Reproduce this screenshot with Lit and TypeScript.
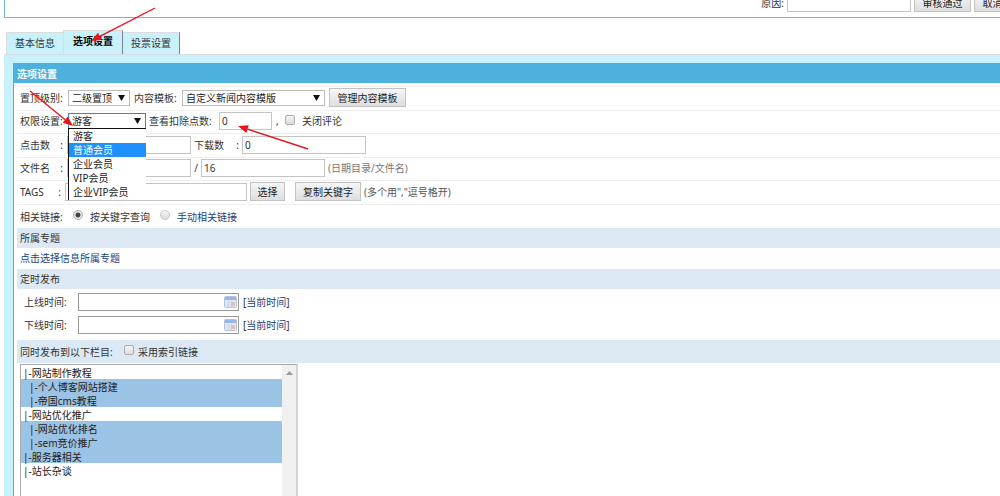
import { LitElement, html, css, svg } from "lit";
import { customElement, state } from "lit/decorators.js";

const LEVELS = ["游客", "普通会员", "企业会员", "VIP会员", "企业VIP会员"];

const COLUMNS = [
  { name: "|-网站制作教程", child: false, picked: false },
  { name: "|-个人博客网站搭建", child: true, picked: true },
  { name: "|-帝国cms教程", child: true, picked: true },
  { name: "|-网站优化推广", child: false, picked: false },
  { name: "|-网站优化排名", child: true, picked: true },
  { name: "|-sem竞价推广", child: true, picked: true },
  { name: "|-服务器相关", child: false, picked: true },
  { name: "|-站长杂谈", child: false, picked: false },
];

const calendar = html`<svg class="cal" viewBox="0 0 13 12" aria-hidden="true">
  <rect x="0.5" y="0.5" width="12" height="11" rx="1" fill="#dfe8f6" stroke="#b3c3de" />
  <rect x="1" y="1" width="11" height="3" fill="#9ab5e2" />
  <path d="M2 6.5h9M2 9h9M4.5 4.5v6.500M7.500 4.500v6.500" stroke="#c6d3ea" stroke-width="0.7" />
  <rect x="7" y="6" width="4" height="4" fill="#eebba6" />
</svg>`;

@customElement("app-root")
export class AppRoot extends LitElement {
  @state() private level = 1;

  static styles = css`
    :host {
      display: block;
      position: relative;
      height: 100vh;
      overflow: hidden;
      background: #fff;
      color: #333;
      font: 10px/14px "Noto Sans", "Noto Sans CJK SC", sans-serif;
    }
    * { box-sizing: border-box; }
    a { color: #23417d; text-decoration: none; }
    .page { display: flex; flex-direction: column; height: 100%; padding-left: 4px; }
    .review {
      display: flex;
      justify-content: flex-end;
      align-items: flex-end;
      gap: 3px;
      height: 18px;
      padding-bottom: 5px;
      border-left: 1px solid #6db9d3;
      border-bottom: 1px solid #6db9d3;
      overflow: hidden;
    }
    .review > * { flex: none; }
    .review label { padding-bottom: 2px; }
    .clipped { width: 26px; overflow: hidden; display: flex; align-items: flex-end; }
    input, button, select { font: inherit; color: inherit; margin: 0; border-radius: 0; outline: none; }
    input[type="text"] {
      height: 18px;
      padding: 0 2px;
      border: 1px solid #c4c4c4;
      background: #fff;
    }
    button {
      flex: none;
      height: 19px;
      padding: 0;
      border: 1px solid #c2c2c2;
      background: linear-gradient(#f6f6f6, #dedede);
      color: #222;
      white-space: nowrap;
    }
    .tabs { display: flex; align-items: flex-end; height: 36px; padding-left: 2px; }
    .tabs button {
      width: 57px;
      height: 22px;
      padding-bottom: 2px;
      border: 0;
      border-top: 1px solid #dcdcdc;
      border-right: 1px solid #77848c;
      background: #c9f1fb;
      color: #333;
    }
    .tabs .first { border-left: 1px solid #dcdcdc; border-right: 0; }
    .tabs .active { width: 60px; height: 24px; padding-bottom: 4px; font-weight: 700; color: #000; border-left: 1px solid #dcdcdc; }
    .panel { flex: 1; min-height: 0; padding: 8px 0 0 9px; background: #c9f1fb; border-top: 1px solid #d6dde0; }
    .sheet { height: 100%; background: #fff; border-left: 1px solid #4eb1dd; padding-left: 3px; }
    h2 {
      margin: 0 0 3px -3px;
      padding: 2px 0 0 3px;
      height: 20px;
      font-size: 10px;
      line-height: 18px;
      color: #fff;
      background: #4eb1dd;
    }
    .row { display: flex; align-items: center; height: 23px; padding: 0 0 2px 3px; border-top: 1px solid #efefef; white-space: nowrap; }
    .tall { height: 24px; }
    .name { width: 48px; flex: none; }
    .split { display: flex; justify-content: space-between; width: 47px; padding-right: 4px; }
    .split.down { width: 48px; padding: 0 3px; margin-left: 3px; padding-left: 0; }
    .split.tags { width: 45px; }
    .mid { padding-left: 4px; width: 52px; flex: none; }
    .points { width: 73px; padding-left: 3px; flex: none; }
    select.drop {
      appearance: none;
      height: 16px;
      padding: 0 14px 0 3px;
      border: 1px solid #bcbcbc;
      background: #fff url("data:image/svg+xml,%3Csvg xmlns='http://www.w3.org/2000/svg' width='7' height='6'%3E%3Cpath d='M0 0h7L3.500 6z' fill='%23111'/%3E%3C/svg%3E") no-repeat right 4px center;
      color: #222;
    }
    .w-top { width: 62px; }
    .w-tpl { width: 143px; }
    .w-level { width: 78px; }
    select.w-level { border-color: #3b7fe0; }
    .w-manage { width: 77px; margin-left: 4px; }
    .w-num { width: 53px; }
    .w-file { width: 124px; }
    .w-tags { width: 182px; }
    .w-pick { width: 35px; margin: 0 10px 0 3px; }
    .w-copy { width: 66px; margin-right: 3px; }
    .w-pass { width: 57px; }
    .w-cancel { width: 57px; }
    .comma { width: 13px; padding-left: 4px; }
    .slash { width: 10px; text-align: center; }
    .hint { color: #777; margin-left: 3px; }
    .note { color: #555; }
    input[type="checkbox"], input[type="radio"] {
      appearance: none;
      flex: none;
      width: 10px;
      height: 10px;
      margin: 0 7px 3px 0;
      border: 1px solid #adadad;
      background: linear-gradient(#f4f4f4, #dcdcdc);
    }
    input[type="checkbox"] { border-radius: 2px; }
    input[type="radio"] { border-radius: 50%; margin-left: 5px; }
    input[type="radio"]:not(:checked) { border-color: #c6c6c6; }
    input[type="radio"]:checked { background: radial-gradient(circle, #444 0 2px, #eee 3px); }
    .auto { width: 65px; flex: none; }
    .combo { position: relative; display: flex; }
    .menu {
      position: absolute;
      z-index: 2;
      top: 15px;
      left: 0;
      width: 78px;
      margin: 0;
      padding: 0 0 1px;
      list-style: none;
      background: #fff;
      border-left: 1px solid #111;
      border-top: 1px solid #111;
      color: #222;
    }
    .menu li { padding-left: 4px; height: 14px; }
    .menu .on { background: #1e90ff; color: #fff; }
    .band { display: flex; align-items: center; height: 20px; padding-left: 3px; background: #dce9f4; }
    .link { display: flex; align-items: center; height: 21px; padding: 0 0 2px 3px; }
    .links { height: 24px; }
    .row.links { padding-bottom: 0; }
    .times { display: flex; flex-direction: column; gap: 5px; padding: 4px 0 6px 7px; }
    .time { display: flex; align-items: center; }
    .time label { width: 54px; }
    .box { position: relative; display: flex; margin-right: 4px; }
    .box input[type="text"] { width: 161px; border: 1px solid #999; padding-right: 18px; }
    .cal { position: absolute; right: 2px; top: 3px; width: 13px; height: 12px; }
    .publish { height: 23px; }
    .target { width: 104px; }
    .publish input { margin-right: 4px; }
    .listbox {
      display: flex;
      width: 278px;
      height: 280px;
      margin: 1px 0 0 3px;
      border: 1px solid #a9a9a9;
      border-right: 2px solid #d4d4d4;
    }
    select.list {
      flex: 1;
      min-width: 0;
      height: 100%;
      padding: 0;
      border: 0;
      overflow-y: auto;
      background: #fff;
      color: #222;
    }
    .track { display: flex; flex: none; justify-content: center; width: 14px; padding-top: 6px; background: #f0f0f0; }
    .track svg { width: 7px; height: 4px; fill: #999; }
    .list option { display: block; height: 14px; min-height: 14px; padding: 0 2px; line-height: 14px; color: #222; }
    .list option.child { padding-left: 8px; }
    .list option:checked { background: #9ac3e5 linear-gradient(#9ac3e5, #9ac3e5); color: #222; }
    .arrows { position: absolute; inset: 0; z-index: 3; width: 100%; height: 100%; pointer-events: none; }
  `;

  private arrow(x1: number, y1: number, x2: number, y2: number) {
    const a = Math.atan2(y2 - y1, x2 - x1);
    const bx = x2 - 10 * Math.cos(a);
    const by = y2 - 10 * Math.sin(a);
    const dx = 4 * Math.sin(a);
    const dy = 4 * Math.cos(a);
    return svg`
      <path d="M${x1} ${y1}L${bx} ${by}" stroke="#e8141c" stroke-width="1.4" />
      <path d="M${x2} ${y2}L${bx + dx} ${by - dy}L${bx - dx} ${by + dy}z" fill="#e8141c" />`;
  }

  render() {
    return html`
      <div class="page">
        <div class="review">
          <label for="reason">原因:</label>
          <input id="reason" class="w-file" type="text" />
          <button class="w-pass">审核通过</button>
          <div class="clipped"><button class="w-cancel">取消审核</button></div>
        </div>
        <nav class="tabs">
          <button class="first">基本信息</button>
          <button class="active">选项设置</button>
          <button>投票设置</button>
        </nav>
        <main class="panel">
          <div class="sheet">
            <h2>选项设置</h2>
            <div class="row tall">
              <label class="name" for="top">置顶级别:</label>
              <select id="top" class="drop w-top"><option>二级置顶</option></select>
              <label class="mid" for="tpl">内容模板:</label>
              <select id="tpl" class="drop w-tpl"><option>自定义新闻内容模版</option></select>
              <button class="w-manage">管理内容模板</button>
            </div>
            <div class="row">
              <label class="name" for="level">权限设置:</label>
              <div class="combo">
                <select id="level" class="drop w-level"><option>游客</option></select>
                <ul class="menu" role="listbox">
                  ${LEVELS.map((l, i) => html`<li role="option" class=${i === this.level ? "on" : ""}
                    aria-selected=${i === this.level} @mouseenter=${() => (this.level = i)}>${l}</li>`)}
                </ul>
              </div>
              <label class="points" for="points">查看扣除点数:</label>
              <input id="points" class="w-num" type="text" value="0" />
              <span class="comma">,</span>
              <input id="closed" type="checkbox" /><label for="closed">关闭评论</label>
            </div>
            <div class="row tall">
              <label class="split" for="hits"><span>点击数</span><span>:</span></label>
              <input id="hits" class="w-file" type="text" />
              <label class="split down" for="downs"><span>下载数</span><span>:</span></label>
              <input id="downs" class="w-file" type="text" value="0" />
            </div>
            <div class="row">
              <label class="split" for="dir"><span>文件名</span><span>:</span></label>
              <input id="dir" class="w-file" type="text" />
              <label class="slash" for="file">/</label>
              <input id="file" class="w-file" type="text" value="16" />
              <span class="hint">(日期目录/文件名)</span>
            </div>
            <div class="row tall">
              <label class="split tags" for="tags"><span>TAGS</span><span>:</span></label>
              <input id="tags" class="w-tags" type="text" />
              <button class="w-pick">选择</button>
              <button class="w-copy">复制关键字</button>
              <span class="note">(多个用","逗号格开)</span>
            </div>
            <div class="row links">
              <span class="name">相关链接:</span>
              <input id="auto" type="radio" name="rel" checked /><label class="auto" for="auto">按关键字查询</label>
              <input id="manual" type="radio" name="rel" aria-label="手动相关链接" /><a href="#">手动相关链接</a>
            </div>
            <div class="band">所属专题</div>
            <div class="link"><a href="#">点击选择信息所属专题</a></div>
            <div class="band">定时发布</div>
            <div class="times">
              <div class="time">
                <label for="on">上线时间:</label>
                <div class="box"><input id="on" type="text" />${calendar}</div>
                <span>[<a href="#">当前时间</a>]</span>
              </div>
              <div class="time">
                <label for="off">下线时间:</label>
                <div class="box"><input id="off" type="text" />${calendar}</div>
                <span>[<a href="#">当前时间</a>]</span>
              </div>
            </div>
            <div class="band publish">
              <label class="target" for="columns">同时发布到以下栏目:</label>
              <input id="index" type="checkbox" /><label for="index">采用索引链接</label>
            </div>
            <div class="listbox">
              <select id="columns" class="list" multiple size="8">
                ${COLUMNS.map((c) => html`<option class=${c.child ? "child" : ""} ?selected=${c.picked}>${c.name}</option>`)}
              </select>
              <div class="track" aria-hidden="true"><svg viewBox="0 0 7 4"><path d="M0 4h7L3.500 0z" /></svg></div>
            </div>
          </div>
        </main>
      </div>
      <svg class="arrows" aria-hidden="true">
        ${this.arrow(155, 8, 91, 41)}${this.arrow(30, 91, 73, 126)}${this.arrow(308, 149, 238, 126)}
      </svg>
    `;
  }
}
